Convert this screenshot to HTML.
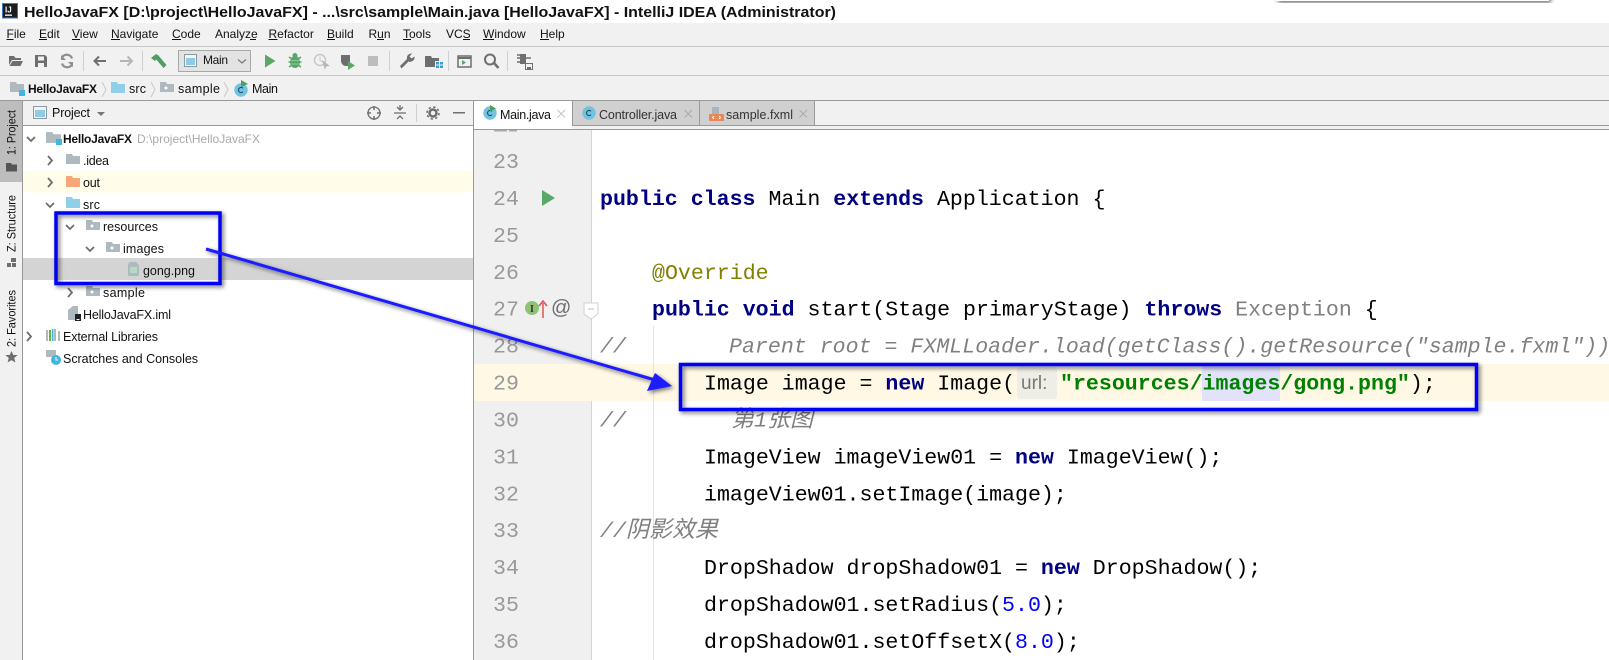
<!DOCTYPE html>
<html><head><meta charset="utf-8"><style>
html,body{margin:0;padding:0;background:#fff;overflow:hidden}
svg{display:block}
.u{font-family:"Liberation Sans","Noto Sans CJK SC",sans-serif;font-size:12px;fill:#111}
.t{font-family:"Liberation Sans",sans-serif;font-size:12.5px;fill:#111}
.c{font-family:"Liberation Mono","Noto Sans CJK SC",monospace;font-size:21.6px;fill:#000;white-space:pre}
.n{fill:#999}
.k{fill:#000080;font-weight:bold}
.g{fill:#808080;font-style:italic}
.z{font-size:23px}
</style></head><body>
<svg xmlns="http://www.w3.org/2000/svg" width="1609" height="660" viewBox="0 0 1609 660">
<defs>
<filter id="sh" x="-10%" y="-20%" width="120%" height="140%"><feDropShadow dx="2" dy="2" stdDeviation="2" flood-color="#000" flood-opacity=".55"/></filter>
<symbol id="fold" viewBox="0 0 14 12" overflow="visible"><path d="M0 1h6l1 2h7v8H0z" fill="#aeb9c0"/><circle cx="6" cy="7" r="1.5" fill="#fff"/></symbol>
<symbol id="pl" viewBox="0 0 14 12" overflow="visible"><path d="M0 1h6l1 2h7v8H0z" fill="#aeb9c0"/></symbol>
<symbol id="cls" viewBox="0 0 14 14" overflow="visible"><circle cx="7" cy="7" r="6.7" fill="#70c3e3"/><path d="M9 5.2A2.6 2.6 0 1 0 9 8.8" fill="none" stroke="#2a4a5a" stroke-width="1.1"/></symbol>
</defs>

<rect width="1609" height="660" fill="#fff"/>

<!-- title bar -->
<rect x="2.500" y="3.500" width="15" height="14.500" fill="#1c1c1c" stroke="#3a7bc8"/>
<text x="5" y="12.500" font-family="Liberation Sans" font-size="8" font-weight="bold" fill="#fff">IJ</text>
<rect x="5" y="14.500" width="7" height="1.300" fill="#fff"/>
<text x="24" y="17" font-family="Liberation Sans" font-size="15" font-weight="bold" fill="#111" textLength="812" lengthAdjust="spacingAndGlyphs">HelloJavaFX [D:\project\HelloJavaFX] - ...\src\sample\Main.java [HelloJavaFX] - IntelliJ IDEA (Administrator)</text>
<g filter="url(#sh)"><rect x="1276" y="-8" width="273" height="9" fill="#fff"/></g>

<!-- bars -->
<rect y="23" width="1609" height="107" fill="#f1f1f1"/>
<rect y="46" width="1609" height="1" fill="#c8c8c8"/>
<rect y="75" width="1609" height="1" fill="#c8c8c8"/>
<rect y="100" width="1609" height="1" fill="#999"/>

<!-- menu -->
<g>
<text class="u" x="6.500" y="38">File</text><rect x="6.500" y="39" width="7" height="1" fill="#111"/>
<text class="u" x="39" y="38">Edit</text><rect x="39" y="39" width="8" height="1" fill="#111"/>
<text class="u" x="72" y="38">View</text><rect x="72" y="39" width="8" height="1" fill="#111"/>
<text class="u" x="111" y="38">Navigate</text><rect x="111" y="39" width="9" height="1" fill="#111"/>
<text class="u" x="172" y="38">Code</text><rect x="172" y="39" width="9" height="1" fill="#111"/>
<text class="u" x="215" y="38">Analyze</text><rect x="250" y="39" width="6" height="1" fill="#111"/>
<text class="u" x="268.500" y="38">Refactor</text><rect x="268.500" y="39" width="9" height="1" fill="#111"/>
<text class="u" x="327" y="38">Build</text><rect x="327" y="39" width="8" height="1" fill="#111"/>
<text class="u" x="368.500" y="38">Run</text><rect x="377" y="39" width="7" height="1" fill="#111"/>
<text class="u" x="403" y="38">Tools</text><rect x="403" y="39" width="8" height="1" fill="#111"/>
<text class="u" x="446" y="38">VCS</text><rect x="463" y="39" width="7" height="1" fill="#111"/>
<text class="u" x="483" y="38">Window</text><rect x="483" y="39" width="11" height="1" fill="#111"/>
<text class="u" x="540" y="38">Help</text><rect x="540" y="39" width="9" height="1" fill="#111"/>
</g>

<!-- toolbar -->
<g>
<path d="M9 56h5l1.500 2H21v2H12l-3 5zM12.500 61H23l-2.500 5H9.500z" fill="#6e6e6e"/>
<path d="M35 55h10l2 2v10H35zM38 56.500v4h6v-4zM38 63v4h6v-4z" fill="#6e6e6e" fill-rule="evenodd"/>
<path d="M72 58.500a5.500 5.500 0 0 0-10-1M62 63.500a5.500 5.500 0 0 0 10 1" fill="none" stroke="#8f8f8f" stroke-width="2.200"/><path d="M61 55v5h5zM73 67v-5h-5z" fill="#8f8f8f"/>
<rect x="83" y="51" width="1" height="20" fill="#d0d0d0"/>
<path d="M106 61H94M99 56.500L94.500 61l4.500 4.500" fill="none" stroke="#6e6e6e" stroke-width="2"/>
<path d="M120 61h12M127.500 56.500L132 61l-4.500 4.500" fill="none" stroke="#b5b5b5" stroke-width="2"/>
<rect x="142" y="51" width="1" height="20" fill="#d0d0d0"/>
<path d="M151 58l5-4 3 2-4 5zM155 58l3-3 8.500 10-3 3z" fill="#4f9d62"/>
<rect x="178.500" y="50.500" width="72" height="21" fill="#e3e3e3" stroke="#a8a8a8"/>
<rect x="184.500" y="54.500" width="12" height="12" fill="#f4f4f4" stroke="#8c9aa3"/><rect x="186" y="58" width="9" height="7" fill="#8fcbe6"/>
<text class="u" x="203" y="64" textLength="25">Main</text>
<path d="M238 59.500l4 3.500 4-3.500" fill="none" stroke="#777" stroke-width="1.200"/>
<path d="M265 54.500l10.500 6.500-10.500 6.500z" fill="#59a869"/>
<ellipse cx="295" cy="62" rx="5" ry="6" fill="#59a869"/><path d="M289 57l3 2M301 57l-3 2M288.500 62h3M298.500 62h3M289 67l3-2M301 67l-3-2" stroke="#59a869" stroke-width="1.600"/><circle cx="295" cy="55.500" r="2.500" fill="#59a869"/><path d="M291 60.500h8M291 64h8" stroke="#8cc79a"/>
<circle cx="320" cy="60" r="5.500" fill="none" stroke="#c8c8c8" stroke-width="1.500"/><path d="M320 56.500v4l2.500 1.500" fill="none" stroke="#c8c8c8"/><path d="M322 60l8 6-4 .5-1 3.500z" fill="#b5b5b5"/>
<path d="M341 55h9v11h-4a5 5.500 0 0 1-5-6z" fill="#6e6e6e"/><path d="M348 61l7 4.500-7 4.500z" fill="#59a869"/>
<rect x="368" y="56" width="10" height="10" fill="#bdbdbd"/>
<rect x="389" y="51" width="1" height="20" fill="#d0d0d0"/>
<path d="M400 66l7-7a4.500 4.500 0 0 1 5-5.500l-2.500 3 2 2 3-2a4.500 4.500 0 0 1-6 5l-7 7z" fill="#6e6e6e"/>
<path d="M425 56h6l1 2h7v3h-4v6h-10z" fill="#6e6e6e"/><path d="M436 62h3v2.500h-3zM440 62h3v2.500h-3zM436 65.500h3V68h-3zM440 65.500h3V68h-3z" fill="#389fd6"/>
<rect x="448" y="51" width="1" height="20" fill="#d0d0d0"/>
<rect x="458" y="56" width="13" height="11" fill="none" stroke="#6e6e6e" stroke-width="1.500"/><path d="M458 57h13v2h-13z" fill="#6e6e6e"/><path d="M462 60l4 2.500-4 2.500z" fill="#59a869"/>
<circle cx="490" cy="59.500" r="5" fill="none" stroke="#6e6e6e" stroke-width="2"/><path d="M494 63l4.500 5" stroke="#6e6e6e" stroke-width="2.500"/>
<rect x="507" y="51" width="1" height="20" fill="#d0d0d0"/>
<path d="M517 55h3M517 58h3M517 62h3" fill="none" stroke="#6e6e6e" stroke-width="1.500"/><rect x="520" y="54" width="6" height="10" fill="#6e6e6e"/><path d="M526 58h5" stroke="#6e6e6e" stroke-width="1.500"/>
<rect x="525.500" y="63.500" width="7" height="6" fill="#f1f1f1" stroke="#6e6e6e"/><rect x="527" y="67" width="4" height="3" fill="#6e6e6e"/>
</g>

<!-- breadcrumb -->
<use href="#pl" x="10" y="81" width="14" height="12"/><rect x="19" y="90" width="6" height="6" fill="#40b6e0"/>
<text class="t" x="28" y="93" style="font-weight:bold;font-size:12px" textLength="69">HelloJavaFX</text>
<path d="M102 82l4 7.500-4 7.500" fill="none" stroke="#c8c8c8"/>
<path d="M111 82h6l1 2h7v9h-14z" fill="#8fcfe8"/>
<text class="t" x="129" y="93" textLength="17">src</text>
<path d="M151 82l4 7.500-4 7.500" fill="none" stroke="#c8c8c8"/>
<use href="#fold" x="160" y="81" width="14" height="12"/>
<text class="t" x="178" y="93" textLength="42">sample</text>
<path d="M224 82l4 7.500-4 7.500" fill="none" stroke="#c8c8c8"/>
<use href="#cls" x="234" y="83" width="14" height="14"/><path d="M241 80l7 4-7 3z" fill="#4f9d62"/>
<text class="t" x="252" y="93" textLength="26">Main</text>

<!-- left strip -->
<rect y="101" width="22" height="559" fill="#f1f1f1"/>
<rect y="101" width="22" height="81" fill="#bdbdbd"/>
<rect x="22" y="101" width="1" height="559" fill="#999"/>
<text class="u" transform="translate(15.500 155) rotate(-90)" textLength="45" lengthAdjust="spacingAndGlyphs">1: Project</text>
<path d="M6 163h5l1 1.500h5v7H6z" fill="#555"/>
<text class="u" transform="translate(15.500 252) rotate(-90)" textLength="57" lengthAdjust="spacingAndGlyphs">Z: Structure</text>
<path d="M11 258h5v4h-5zM7 263h4v4H7zM12 263h4v4h-4z" fill="#6e6e6e"/>
<text class="u" transform="translate(15.500 347) rotate(-90)" textLength="57" lengthAdjust="spacingAndGlyphs">2: Favorites</text>
<path d="M11.500 351l1.800 4h4.400l-3.500 3 1.200 4.500-3.900-2.400-3.900 2.400 1.200-4.500-3.500-3h4.400z" fill="#6e6e6e"/>

<!-- project panel -->
<rect x="23" y="101" width="450" height="559" fill="#fff"/>
<rect x="23" y="101" width="450" height="25" fill="#f1f1f1"/>
<rect x="23" y="125" width="450" height="1" fill="#999"/>
<rect x="473" y="101" width="1" height="559" fill="#999"/>
<rect x="33.500" y="106.500" width="13" height="12" fill="#f4f4f4" stroke="#8c9aa3"/><rect x="35" y="110" width="10" height="7" fill="#8fcbe6"/>
<text class="t" x="52" y="117" textLength="38">Project</text>
<path d="M97 112h8l-4 4z" fill="#777"/>
<circle cx="374" cy="113" r="6" fill="none" stroke="#6e6e6e" stroke-width="1.300"/><path d="M374 106v4M374 116v4M367 113h4M377 113h4" stroke="#6e6e6e" stroke-width="1.500"/>
<path d="M394 113h12M400 105v4M397 107l3 3 3-3M397 119l3-3 3 3" fill="none" stroke="#6e6e6e" stroke-width="1.300"/>
<rect x="416" y="104" width="1" height="18" fill="#d0d0d0"/>
<circle cx="433" cy="113" r="3.500" fill="none" stroke="#6e6e6e" stroke-width="2.500"/><circle cx="433" cy="113" r="6" fill="none" stroke="#6e6e6e" stroke-width="1.500" stroke-dasharray="2.400 2.300"/>
<rect x="453" y="112" width="12" height="1.500" fill="#6e6e6e"/>

<rect x="23" y="171" width="450" height="21.500" fill="#fffdea"/>
<rect x="23" y="258" width="450" height="22" fill="#d4d4d4"/>

<!-- tree -->
<path d="M27 137l4 4 4-4" fill="none" stroke="#6e6e6e" stroke-width="1.800"/>
<use href="#pl" x="46" y="131" width="15" height="13"/><rect x="56" y="139" width="6" height="6" fill="#40b6e0"/>
<text class="t" x="63" y="143" style="font-weight:bold;font-size:12px" textLength="69">HelloJavaFX</text>
<text class="t" x="137" y="143" style="fill:#a9a9a9;font-size:12px" textLength="123">D:\project\HelloJavaFX</text>

<path d="M48 156l4 4.500-4 4.500" fill="none" stroke="#6e6e6e" stroke-width="1.800"/>
<use href="#pl" x="66" y="153" width="14" height="12"/>
<text class="t" x="83" y="165" textLength="26">.idea</text>

<path d="M48 178l4 4.500-4 4.500" fill="none" stroke="#6e6e6e" stroke-width="1.800"/>
<path d="M66 176h6l1 2h7v9H66z" fill="#f8a878"/>
<text class="t" x="83" y="187" textLength="17">out</text>

<path d="M46 203l4 4 4-4" fill="none" stroke="#6e6e6e" stroke-width="1.800"/>
<path d="M66 197h6l1 2h7v9H66z" fill="#8fcfe8"/>
<text class="t" x="83" y="209" textLength="17">src</text>

<path d="M66 225l4 4 4-4" fill="none" stroke="#6e6e6e" stroke-width="1.800"/>
<use href="#fold" x="86" y="219" width="14" height="12"/>
<text class="t" x="103" y="231" textLength="55">resources</text>

<path d="M86 247l4 4 4-4" fill="none" stroke="#6e6e6e" stroke-width="1.800"/>
<use href="#fold" x="106" y="241" width="14" height="12"/>
<text class="t" x="123" y="253" textLength="41">images</text>

<path d="M130 262h6l3 3v11h-11v-12z" fill="#aeb9c0"/><rect x="130" y="267" width="7" height="6" fill="#b5dcc0"/>
<text class="t" x="143" y="275" textLength="52">gong.png</text>

<path d="M68 288l4 4.500-4 4.500" fill="none" stroke="#6e6e6e" stroke-width="1.800"/>
<use href="#fold" x="86" y="285" width="14" height="12"/>
<text class="t" x="103" y="297" textLength="42">sample</text>

<path d="M73 306h5v14H68v-10z" fill="#aeb9c0"/><rect x="75" y="314" width="6" height="7" fill="#222"/><rect x="76.500" y="319" width="3" height="1" fill="#fff"/>
<text class="t" x="83" y="319" textLength="88">HelloJavaFX.iml</text>

<path d="M27 332l4 4.500-4 4.500" fill="none" stroke="#6e6e6e" stroke-width="1.800"/>
<path d="M46 330h2v11h-2zM54 329h2v12h-2zM58 331h2v10h-2z" fill="#aeb9c0"/><rect x="49" y="330" width="2" height="11" fill="#62b543"/><rect x="52" y="329" width="1.500" height="12" fill="#40b6e0"/>
<text class="t" x="63" y="341" textLength="95">External Libraries</text>

<path d="M46 350h10v7H46z" fill="#aeb9c0"/><circle cx="56" cy="360" r="5" fill="#40b6e0"/><path d="M56 357v3h2" fill="none" stroke="#fff"/>
<text class="t" x="63" y="363" textLength="135">Scratches and Consoles</text>

<!-- tabs -->
<rect x="474" y="101" width="1135" height="29" fill="#f1f1f1"/>
<rect x="572" y="101" width="242" height="24.500" fill="#d0d0d0"/>
<rect x="474" y="101" width="98" height="29" fill="#fff"/>
<rect x="474" y="125" width="1135" height="1" fill="#999"/><rect x="474" y="129" width="1135" height="1" fill="#999"/>
<rect x="474" y="125" width="98" height="4" fill="#fff"/>
<rect x="572" y="101" width="1" height="25" fill="#999"/><rect x="699" y="101" width="1" height="25" fill="#999"/><rect x="814" y="101" width="1" height="25" fill="#999"/>
<use href="#cls" x="483" y="106" width="14" height="14"/><path d="M490 105l6 3.500-6 3z" fill="#4f9d62"/>
<text class="t" x="500" y="119" textLength="51">Main.java</text>
<path d="M557.500 110l7.500 7.500M565 110l-7.500 7.500" stroke="#c4c4c4"/>
<use href="#cls" x="582" y="106" width="14" height="14"/>
<text class="t" x="599" y="119" textLength="78" style="fill:#333">Controller.java</text>
<path d="M684.500 110l7.500 7.500M692 110l-7.500 7.500" stroke="#aaa"/>
<path d="M712 107h7v7h-7z" fill="#a9b4bb"/><rect x="709" y="114" width="15" height="7" fill="#e8875a"/><path d="M714 116l-1.500 1.500 1.500 1.500M719 116l1.500 1.500-1.500 1.500" fill="none" stroke="#fff"/>
<text class="t" x="726" y="119" textLength="67" style="fill:#333">sample.fxml</text>
<path d="M799.500 110l7.500 7.500M807 110l-7.500 7.500" stroke="#aaa"/>

<!-- editor -->
<rect x="474" y="130" width="117" height="530" fill="#f0f0f0"/>
<rect x="591" y="130" width="1" height="530" fill="#d4d4d4"/>
<rect x="474" y="364" width="1135" height="37" fill="#fff8e4"/>
<rect x="653" y="326" width="1" height="334" fill="#e2e2e2"/>
<rect x="494" y="130" width="13" height="1.500" fill="#aaa"/><rect x="509" y="130" width="8" height="1.500" fill="#aaa"/>

<g>
<text class="c n" x="493" y="168">23</text>
<text class="c n" x="493" y="204.900">24</text>
<text class="c n" x="493" y="241.800">25</text>
<text class="c n" x="493" y="278.800">26</text>
<text class="c n" x="493" y="315.700">27</text>
<text class="c n" x="493" y="352.600">28</text>
<text class="c n" x="493" y="389.500">29</text>
<text class="c n" x="493" y="426.400">30</text>
<text class="c n" x="493" y="463.400">31</text>
<text class="c n" x="493" y="500.300">32</text>
<text class="c n" x="493" y="537.200">33</text>
<text class="c n" x="493" y="574.100">34</text>
<text class="c n" x="493" y="611">35</text>
<text class="c n" x="493" y="648">36</text>

<text class="c" x="600" y="204.900"><tspan class="k">public class</tspan> Main <tspan class="k">extends</tspan> Application {</text>
<text class="c" x="652" y="278.800" style="fill:#808000">@Override</text>
<text class="c" x="652" y="315.700"><tspan class="k">public void</tspan> start(Stage primaryStage) <tspan class="k">throws</tspan> <tspan fill="#808080">Exception</tspan> {</text>
<text class="c g" x="600" y="352.600">//</text>
<text class="c g" x="729" y="352.600">Parent root = FXMLLoader.load(getClass().getResource("sample.fxml"));</text>
<rect x="1017" y="367" width="40" height="32" rx="3" fill="#efeee6"/>
<rect x="1202" y="364" width="78" height="37" fill="#e2e2fb"/>
<text class="c" x="704" y="389.500">Image image = <tspan class="k">new</tspan> Image(</text>
<text x="1021" y="389" font-family="Liberation Sans" font-size="19" fill="#777">url:</text>
<text class="c" x="1060" y="389.500"><tspan fill="#008000" font-weight="bold">"resources/images/gong.png"</tspan>);</text>
<text class="c g" x="600" y="426.400">//</text>
<text class="c g" x="731" y="426.400"><tspan class="z">第</tspan>1<tspan class="z">张图</tspan></text>
<text class="c" x="704" y="463.400">ImageView imageView01 = <tspan class="k">new</tspan> ImageView();</text>
<text class="c" x="704" y="500.300">imageView01.setImage(image);</text>
<text class="c g" x="600" y="537.200">//<tspan class="z">阴影效果</tspan></text>
<text class="c" x="704" y="574.100">DropShadow dropShadow01 = <tspan class="k">new</tspan> DropShadow();</text>
<text class="c" x="704" y="611">dropShadow01.setRadius(<tspan fill="#0000ff">5.0</tspan>);</text>
<text class="c" x="704" y="648">dropShadow01.setOffsetX(<tspan fill="#0000ff">8.0</tspan>);</text>
</g>

<!-- gutter icons -->
<path d="M542 190l13 8-13 8z" fill="#59a869"/>
<circle cx="532" cy="308" r="7" fill="#8fc276"/><text x="532" y="312" text-anchor="middle" font-family="Liberation Serif" font-size="10" font-weight="bold" fill="#333">I</text>
<path d="M543 318v-15M539 306l4-5 4 5" fill="none" stroke="#e25252" stroke-width="1.500"/>
<text x="551" y="314" font-family="Liberation Sans" font-size="20" fill="#6e6e6e">@</text>
<path d="M584 303h14v11l-7 5-7-5z" fill="#fff" stroke="#d0d0d0"/><path d="M588 309h6" stroke="#bbb"/>

<!-- annotations -->
<g filter="url(#sh)">
<rect x="56" y="213" width="164" height="70.500" fill="none" stroke="#0000f5" stroke-width="3.500"/>
<rect x="680.500" y="364.500" width="796" height="45" fill="none" stroke="#0000f5" stroke-width="3.500"/>
<path d="M206 249L655 380" fill="none" stroke="#1a1aff" stroke-width="3"/>
<path d="M672 386L647 391L655 373z" fill="#1a1aff"/>
</g>
</svg>
</body></html>
